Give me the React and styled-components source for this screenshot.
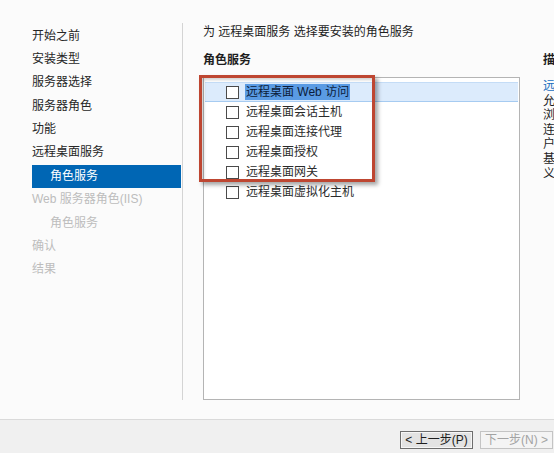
import React from "react";
import styled, { createGlobalStyle } from "styled-components";

const GlobalStyle = createGlobalStyle`
  html, body {
    margin: 0;
    padding: 0;
    background: #fbfbfb;
  }
  body {
    font-family: "Liberation Sans", "Noto Sans CJK SC", sans-serif;
    font-size: 12px;
    color: #1e1e1e;
  }
`;

const Page = styled.div`
  position: relative;
  width: 554px;
  height: 453px;
  overflow: hidden;
  display: flex;
  flex-direction: column;
`;

const Main = styled.div`
  flex: 1;
  display: flex;
  align-items: flex-start;
  padding-top: 23px;
`;

const Nav = styled.nav`
  width: 183px;
  height: 377px;
  padding: 1.5px 1px 0 32px;
  border-right: 1px solid #d4d4d4;
  box-sizing: border-box;
  flex-shrink: 0;
`;

const NavItem = styled.div`
  height: 23.4px;
  line-height: 23.4px;
  padding-left: ${(p) => (p.$sub ? 18 : 0)}px;
  white-space: nowrap;
  color: ${(p) => (p.$active ? "#ffffff" : p.$disabled ? "#bdbdbd" : "#262626")};
  background: ${(p) => (p.$active ? "#0066b4" : "transparent")};
`;

const Content = styled.div`
  flex: 1;
  padding-left: 20px;
  display: flex;
  flex-direction: column;
  min-width: 0;
`;

const Heading = styled.div`
  height: 16px;
  line-height: 16px;
  margin-top: 1px;
  white-space: nowrap;
`;

const Columns = styled.div`
  display: flex;
  gap: 23px;
  margin-top: 12px;
`;

const Column = styled.div`
  display: flex;
  flex-direction: column;
  flex-shrink: 0;
  width: ${(p) => p.$width}px;
`;

const Label = styled.div`
  height: 16px;
  line-height: 16px;
  font-weight: bold;
  white-space: nowrap;
`;

const ListBox = styled.div`
  margin-top: 9px;
  width: 317px;
  height: 323px;
  box-sizing: border-box;
  border: 1px solid #b4b4b4;
  background: #ffffff;
  padding: 4px 1px 0;
`;

const Row = styled.div`
  height: 20px;
  box-sizing: border-box;
  display: flex;
  align-items: center;
  padding-left: 21px;
  gap: 6px;
  white-space: nowrap;
  background: ${(p) => (p.$selected ? "#dcebfc" : "transparent")};
  border-top: 1px solid ${(p) => (p.$selected ? "#c4dcf6" : "transparent")};
  border-bottom: 1px solid ${(p) => (p.$selected ? "#a6cbf1" : "transparent")};
`;

const Check = styled.span`
  width: 11px;
  height: 11px;
  border: 1px solid #4a4a4a;
  background: #ffffff;
  flex-shrink: 0;
`;

const RowText = styled.span`
  line-height: 16px;
  padding: 0 1px;
  color: ${(p) => (p.$selected ? "#0b1c3a" : "#2a2a2a")};
  background: ${(p) => (p.$selected ? "#5a9be4" : "transparent")};
`;

const DescText = styled.div`
  margin-top: 11px;
  line-height: 14.6px;
  white-space: nowrap;
`;

const DescLine = styled.div`
  color: ${(p) => (p.$link ? "#1a6fbf" : "#1e1e1e")};
`;

const Footer = styled.div`
  height: 34px;
  box-sizing: border-box;
  border-top: 1px solid #dadada;
  background: #f0f0f0;
  display: flex;
  align-items: flex-start;
  gap: 7px;
  padding: 11px 0 0 400px;
`;

const Button = styled.button`
  width: 73px;
  height: 18px;
  flex-shrink: 0;
  padding: 0;
  font-family: inherit;
  font-size: 12px;
  line-height: 16px;
  border: 1px solid ${(p) => (p.disabled ? "#c4c4c4" : "#6e6e6e")};
  background: ${(p) => (p.disabled ? "#f4f4f4" : "#e3e3e3")};
  color: ${(p) => (p.disabled ? "#a3a3a3" : "#1e1e1e")};
  box-shadow: ${(p) => (p.disabled ? "none" : "inset 0 0 0 1px #f6f6f6")};
`;

const Callout = styled.div`
  position: absolute;
  left: 199px;
  top: 75px;
  width: 176px;
  height: 107px;
  box-sizing: border-box;
  border: 3px solid #be4631;
  box-shadow: 3px 3px 4px rgba(0, 0, 0, 0.35),
    inset 2px 2px 3px rgba(0, 0, 0, 0.18);
  pointer-events: none;
`;

const navItems = [
  { label: "开始之前" },
  { label: "安装类型" },
  { label: "服务器选择" },
  { label: "服务器角色" },
  { label: "功能" },
  { label: "远程桌面服务" },
  { label: "角色服务", sub: true, active: true },
  { label: "Web 服务器角色(IIS)", disabled: true },
  { label: "角色服务", sub: true, disabled: true },
  { label: "确认", disabled: true },
  { label: "结果", disabled: true },
];

const services = [
  "远程桌面 Web 访问",
  "远程桌面会话主机",
  "远程桌面连接代理",
  "远程桌面授权",
  "远程桌面网关",
  "远程桌面虚拟化主机",
];

const description = [
  "远程桌面 Web 访问",
  "允许用户通过“开始”菜单或 Web",
  "浏览器访问 RemoteApp 和桌面",
  "连接。RemoteApp 和桌面连接为用",
  "户提供了对 RemoteApp 程序、",
  "基于会话的桌面和虚拟桌面的自定",
  "义视图。",
];

export default function App() {
  return (
    <>
      <GlobalStyle />
      <Page>
        <Main>
          <Nav>
            {navItems.map((item, i) => (
              <NavItem
                key={i}
                $sub={item.sub}
                $active={item.active}
                $disabled={item.disabled}
              >
                {item.label}
              </NavItem>
            ))}
          </Nav>
          <Content>
            <Heading>为 远程桌面服务 选择要安装的角色服务</Heading>
            <Columns>
              <Column $width={317}>
                <Label>角色服务</Label>
                <ListBox>
                  {services.map((s, i) => (
                    <Row key={s} $selected={i === 0}>
                      <Check />
                      <RowText $selected={i === 0}>{s}</RowText>
                    </Row>
                  ))}
                </ListBox>
              </Column>
              <Column $width={200}>
                <Label>描述</Label>
                <DescText>
                  {description.map((line, i) => (
                    <DescLine key={i} $link={i === 0}>
                      {line}
                    </DescLine>
                  ))}
                </DescText>
              </Column>
            </Columns>
          </Content>
        </Main>
        <Footer>
          <Button>&lt; 上一步(P)</Button>
          <Button disabled>下一步(N) &gt;</Button>
        </Footer>
        <Callout />
      </Page>
    </>
  );
}
